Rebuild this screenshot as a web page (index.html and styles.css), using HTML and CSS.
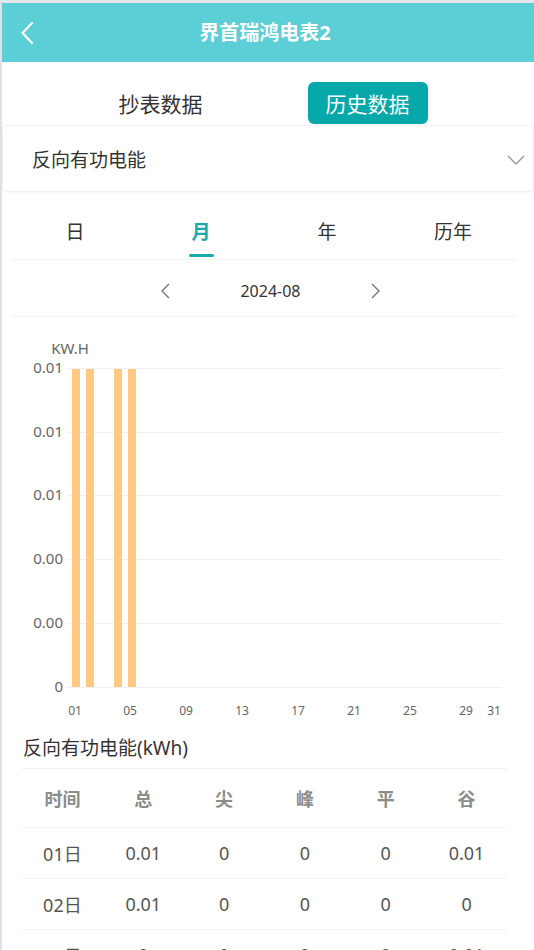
FILE: index.html
```html
<!DOCTYPE html>
<html lang="zh">
<head>
<meta charset="utf-8">
<title>界首瑞鸿电表2</title>
<link rel="stylesheet" href="styles.css">
</head>
<body>
<div class="page">
  <header class="topbar">
    <svg class="back" width="14" height="24" viewBox="0 0 14 24"><path d="M12 2 L2.5 12 L12 22" stroke="#fff" stroke-width="2.2" fill="none" stroke-linecap="round" stroke-linejoin="round"/></svg>
    <h1 class="title">界首瑞鸿电表2</h1>
    <span></span>
  </header>

  <div class="switch">
    <div class="switch-item">抄表数据</div>
    <div class="switch-item"><span class="btn">历史数据</span></div>
  </div>

  <div class="select">
    <span>反向有功电能</span>
    <svg width="18" height="10" viewBox="0 0 18 10"><path d="M1 1 L9 9 L17 1" stroke="#999" stroke-width="1.4" fill="none"/></svg>
  </div>

  <div class="panel">
    <div class="periods">
      <div class="period">日</div>
      <div class="period active">月</div>
      <div class="period">年</div>
      <div class="period">历年</div>
    </div>
    <div class="datenav">
      <svg width="10" height="16" viewBox="0 0 10 16"><path d="M9 1 L2 8 L9 15" stroke="#777" stroke-width="1.4" fill="none"/></svg>
      <span class="date">2024-08</span>
      <svg width="10" height="16" viewBox="0 0 10 16"><path d="M1 1 L8 8 L1 15" stroke="#777" stroke-width="1.4" fill="none"/></svg>
    </div>
    <svg class="chart" width="505" height="411" viewBox="0 0 505 411">
      <g class="grid" stroke="#f0f0f0" stroke-width="1">
        <line x1="56" y1="51.5" x2="490" y2="51.5"/>
        <line x1="56" y1="115.5" x2="490" y2="115.5"/>
        <line x1="56" y1="178.5" x2="490" y2="178.5"/>
        <line x1="56" y1="242.5" x2="490" y2="242.5"/>
        <line x1="56" y1="306.5" x2="490" y2="306.5"/>
        <line x1="56" y1="370.5" x2="490" y2="370.5"/>
      </g>
      <g fill="#ffc983">
        <rect x="60" y="52" width="8" height="318"/>
        <rect x="74" y="52" width="8" height="318"/>
        <rect x="102" y="52" width="8" height="318"/>
        <rect x="116" y="52" width="8" height="318"/>
      </g>
      <text class="unit" x="58" y="37" text-anchor="middle">KW.H</text>
      <g class="ylab" text-anchor="end">
        <text x="51" y="56">0.01</text>
        <text x="51" y="120">0.01</text>
        <text x="51" y="183">0.01</text>
        <text x="51" y="247">0.00</text>
        <text x="51" y="311">0.00</text>
        <text x="51" y="375">0</text>
      </g>
      <g class="xlab" text-anchor="middle">
        <text x="63" y="398">01</text>
        <text x="118" y="398">05</text>
        <text x="174" y="398">09</text>
        <text x="230" y="398">13</text>
        <text x="286" y="398">17</text>
        <text x="342" y="398">21</text>
        <text x="398" y="398">25</text>
        <text x="454" y="398">29</text>
        <text x="482" y="398">31</text>
      </g>
    </svg>
  </div>

  <div class="table-section">
    <div class="table-title">反向有功电能(kWh)</div>
    <table class="data">
      <thead>
        <tr><th>时间</th><th>总</th><th>尖</th><th>峰</th><th>平</th><th>谷</th></tr>
      </thead>
      <tbody>
        <tr><td>01日</td><td>0.01</td><td>0</td><td>0</td><td>0</td><td>0.01</td></tr>
        <tr><td>02日</td><td>0.01</td><td>0</td><td>0</td><td>0</td><td>0</td></tr>
        <tr><td>03日</td><td>0</td><td>0</td><td>0</td><td>0</td><td>0.01</td></tr>
      </tbody>
    </table>
  </div>
</div>
</body>
</html>
```

FILE: styles.css
```css
html, body {
  margin: 0;
  padding: 0;
  background: #fff;
}
body {
  font-family: "Noto Sans", "Noto Sans CJK SC", sans-serif;
  color: #333;
  overflow: hidden;
}
.page {
  border-top: 3px solid #e6e6ea;
  border-left: 2px solid #e0e0e8;
  min-height: 947px;
  box-sizing: border-box;
}
.topbar {
  height: 59px;
  background: #5bcfd5;
  display: grid;
  grid-template-columns: 1fr auto 1fr;
  align-items: center;
}
.back {
  margin-left: 18px;
  display: block;
}
.title {
  margin: 0;
  color: #fff;
  font-size: 20px;
  font-weight: 700;
  line-height: 24px;
  padding-right: 6px;
}
.switch {
  display: grid;
  grid-template-columns: 207px 207px;
  padding: 20px 0 1px 55px;
  align-items: center;
}
.switch-item {
  display: flex;
  justify-content: center;
  align-items: center;
  font-size: 21px;
  color: #333;
  height: 42px;
}
.btn {
  display: inline-flex;
  align-items: center;
  height: 42px;
  padding: 0 18px;
  background: #07a8aa;
  color: #fff;
  border-radius: 6px;
  font-size: 21px;
}
.select {
  height: 65px;
  border: 1px solid #f1f1f1;
  border-radius: 4px;
  box-shadow: 0 1px 2px rgba(0, 0, 0, 0.03);
  display: flex;
  align-items: center;
  justify-content: space-between;
  padding: 0 8px 0 29px;
  font-size: 19px;
  color: #333;
}
.select svg {
  margin-top: 2px;
}
.panel {
  margin-left: 10px;
  width: 504px;
}
.periods {
  display: grid;
  grid-template-columns: repeat(4, 1fr);
  height: 68px;
  border-bottom: 1px solid #f3f3f3;
  box-sizing: border-box;
}
.period {
  display: flex;
  flex-direction: column;
  align-items: center;
  padding-top: 28px;
  font-size: 19px;
  line-height: 24px;
  color: #333;
}
.period.active {
  color: #19a9ab;
  font-weight: 700;
}
.period.active::after {
  content: "";
  display: block;
  width: 25px;
  height: 3px;
  border-radius: 2px;
  background: #19a9ab;
  margin-top: 10px;
}
.datenav {
  height: 57px;
  border-bottom: 1px solid #f3f3f3;
  display: flex;
  align-items: center;
  justify-content: center;
  gap: 70px;
  padding-left: 13px;
  padding-top: 5px;
  box-sizing: border-box;
}
.date {
  font-size: 16px;
  color: #333;
}
.chart {
  display: block;
  font-family: "Noto Sans", "Noto Sans CJK SC", sans-serif;
}
.unit {
  font-size: 15px;
  fill: #666;
}
.ylab text {
  font-size: 15px;
  fill: #666;
}
.xlab text {
  font-size: 12px;
  fill: #666;
}
.table-section {
  margin-left: 20px;
  width: 485px;
}
.table-title {
  padding: 8px 0 0 1px;
  height: 32px;
  font-size: 19px;
  line-height: 24px;
  color: #333;
  border-bottom: 1px solid #f2f3f6;
}
.data {
  width: 485px;
  table-layout: fixed;
  border-collapse: collapse;
}
.data th {
  height: 58px;
  font-size: 18px;
  font-weight: 700;
  color: #8c8c8c;
  text-align: center;
  border-bottom: 1px solid #f2f3f6;
  padding: 0;
}
.data td {
  height: 50px;
  font-size: 18px;
  color: #555;
  text-align: center;
  border-bottom: 1px solid #f2f3f6;
  padding: 0;
}
```
